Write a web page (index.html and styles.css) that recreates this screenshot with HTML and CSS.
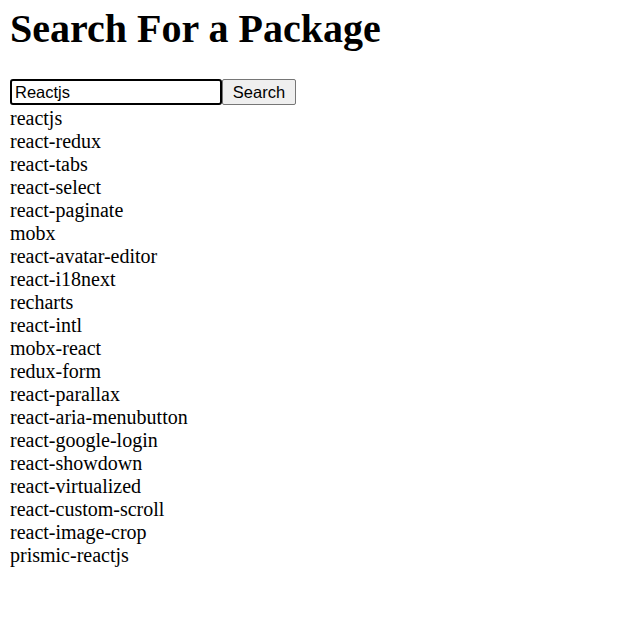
FILE: index.html
```html
<!DOCTYPE html>
<html>
<head>
<meta charset="utf-8">
<link rel="stylesheet" href="styles.css">
</head>
<body>
<h1 class="title">Search For a Package</h1>
<form class="search">
<input class="search-input" type="text" value="Reactjs"><button class="search-btn" type="button">Search</button>
</form>
<ul class="results">
<li>reactjs</li>
<li>react-redux</li>
<li>react-tabs</li>
<li>react-select</li>
<li>react-paginate</li>
<li>mobx</li>
<li>react-avatar-editor</li>
<li>react-i18next</li>
<li>recharts</li>
<li>react-intl</li>
<li>mobx-react</li>
<li>redux-form</li>
<li>react-parallax</li>
<li>react-aria-menubutton</li>
<li>react-google-login</li>
<li>react-showdown</li>
<li>react-virtualized</li>
<li>react-custom-scroll</li>
<li>react-image-crop</li>
<li>prismic-reactjs</li>
</ul>
</body>
</html>
```
FILE: styles.css
```css
body {
  margin: 6px 10px 10px 10px;
  font-family: "Liberation Serif", "Times New Roman", serif;
  font-size: 20px;
  color: #000;
  background: #fff;
}
.title {
  font-size: 40px;
  font-weight: bold;
  margin: 0 0 27px 0;
  line-height: 46px;
}
.search {
  display: flex;
  margin: 0;
  height: 26px;
}
.search-input {
  box-sizing: border-box;
  width: 212px;
  height: 26px;
  margin: 0;
  padding: 1px 3px;
  border: 2px solid #000;
  border-radius: 3px;
  font-family: "Liberation Sans", Arial, sans-serif;
  font-size: 16.5px;
  color: #000;
  outline: none;
}
.search-btn {
  box-sizing: border-box;
  width: 74px;
  height: 26px;
  margin: 0;
  padding: 0 6px;
  border: 1px solid #767676;
  border-radius: 2px;
  background: #efefef;
  font-family: "Liberation Sans", Arial, sans-serif;
  font-size: 16.5px;
  color: #000;
}
.results {
  list-style: none;
  margin: 2px 0 0 0;
  padding: 0;
}
.results li {
  line-height: 23px;
}
```
